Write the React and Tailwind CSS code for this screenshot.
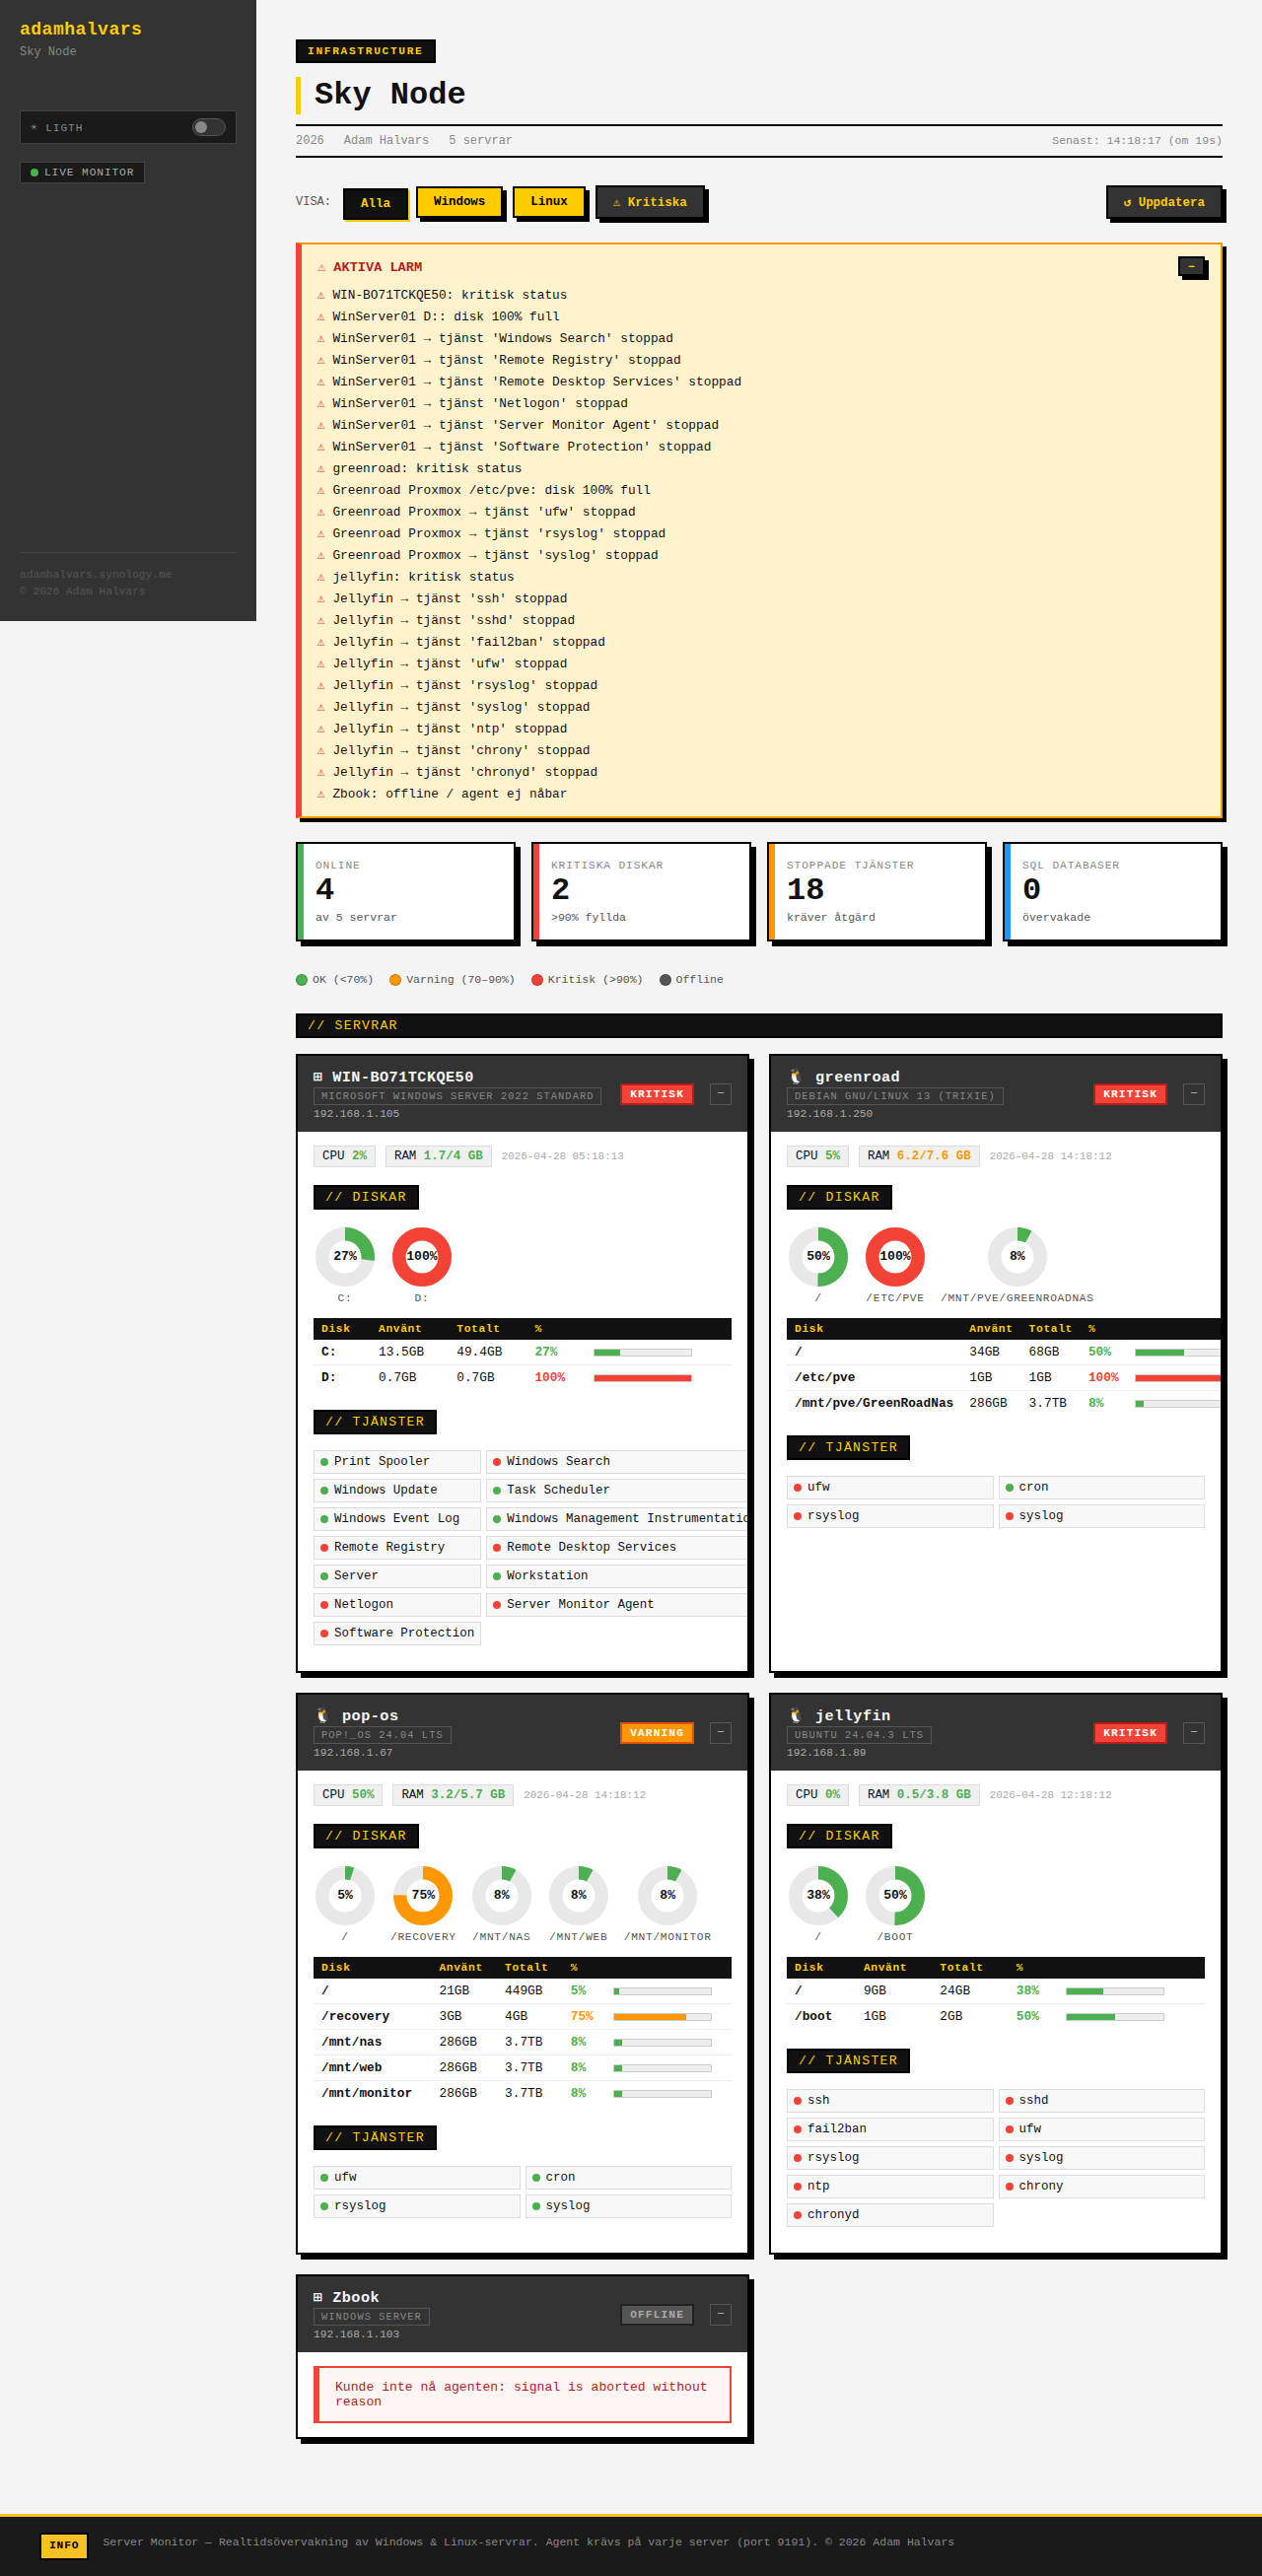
const MONO = "font-['Liberation_Mono','Courier_New',monospace]";

const alerts = [
  "WIN-BO71TCKQE50: kritisk status",
  "WinServer01 D:: disk 100% full",
  "WinServer01 → tjänst 'Windows Search' stoppad",
  "WinServer01 → tjänst 'Remote Registry' stoppad",
  "WinServer01 → tjänst 'Remote Desktop Services' stoppad",
  "WinServer01 → tjänst 'Netlogon' stoppad",
  "WinServer01 → tjänst 'Server Monitor Agent' stoppad",
  "WinServer01 → tjänst 'Software Protection' stoppad",
  "greenroad: kritisk status",
  "Greenroad Proxmox /etc/pve: disk 100% full",
  "Greenroad Proxmox → tjänst 'ufw' stoppad",
  "Greenroad Proxmox → tjänst 'rsyslog' stoppad",
  "Greenroad Proxmox → tjänst 'syslog' stoppad",
  "jellyfin: kritisk status",
  "Jellyfin → tjänst 'ssh' stoppad",
  "Jellyfin → tjänst 'sshd' stoppad",
  "Jellyfin → tjänst 'fail2ban' stoppad",
  "Jellyfin → tjänst 'ufw' stoppad",
  "Jellyfin → tjänst 'rsyslog' stoppad",
  "Jellyfin → tjänst 'syslog' stoppad",
  "Jellyfin → tjänst 'ntp' stoppad",
  "Jellyfin → tjänst 'chrony' stoppad",
  "Jellyfin → tjänst 'chronyd' stoppad",
  "Zbook: offline / agent ej nåbar",
];

const stats = [
  { label: "ONLINE", value: "4", sub: "av 5 servrar", bar: "bg-[#4caf50]" },
  { label: "KRITISKA DISKAR", value: "2", sub: ">90% fyllda", bar: "bg-[#f44336]" },
  { label: "STOPPADE TJÄNSTER", value: "18", sub: "kräver åtgärd", bar: "bg-[#ff9800]" },
  { label: "SQL DATABASER", value: "0", sub: "övervakade", bar: "bg-[#2196f3]" },
];

const legend = [
  ["OK (<70%)", "bg-[#4caf50]"],
  ["Varning (70–90%)", "bg-[#ff9800]"],
  ["Kritisk (>90%)", "bg-[#f44336]"],
  ["Offline", "bg-[#555]"],
];

const servers = [
  {
    icon: "⊞", name: "WIN-BO71TCKQE50", os: "MICROSOFT WINDOWS SERVER 2022 STANDARD", ip: "192.168.1.105",
    status: "KRITISK", cpu: "2%", ram: "1.7/4 GB", ramColor: "text-[#4caf50]", time: "2026-04-28 05:18:13",
    disks: [["C:", "13.5GB", "49.4GB", 27], ["D:", "0.7GB", "0.7GB", 100]],
    services: [
      ["Print Spooler", 1], ["Windows Search", 0], ["Windows Update", 1], ["Task Scheduler", 1],
      ["Windows Event Log", 1], ["Windows Management Instrumentation", 1], ["Remote Registry", 0],
      ["Remote Desktop Services", 0], ["Server", 1], ["Workstation", 1], ["Netlogon", 0],
      ["Server Monitor Agent", 0], ["Software Protection", 0],
    ],
  },
  {
    icon: "🐧", name: "greenroad", os: "DEBIAN GNU/LINUX 13 (TRIXIE)", ip: "192.168.1.250",
    status: "KRITISK", cpu: "5%", ram: "6.2/7.6 GB", ramColor: "text-[#ff9800]", time: "2026-04-28 14:18:12",
    disks: [["/", "34GB", "68GB", 50], ["/etc/pve", "1GB", "1GB", 100], ["/mnt/pve/GreenRoadNas", "286GB", "3.7TB", 8]],
    services: [["ufw", 0], ["cron", 1], ["rsyslog", 0], ["syslog", 0]],
  },
  {
    icon: "🐧", name: "pop-os", os: "POP!_OS 24.04 LTS", ip: "192.168.1.67",
    status: "VARNING", cpu: "50%", ram: "3.2/5.7 GB", ramColor: "text-[#4caf50]", time: "2026-04-28 14:18:12",
    disks: [["/", "21GB", "449GB", 5], ["/recovery", "3GB", "4GB", 75], ["/mnt/nas", "286GB", "3.7TB", 8], ["/mnt/web", "286GB", "3.7TB", 8], ["/mnt/monitor", "286GB", "3.7TB", 8]],
    services: [["ufw", 1], ["cron", 1], ["rsyslog", 1], ["syslog", 1]],
  },
  {
    icon: "🐧", name: "jellyfin", os: "UBUNTU 24.04.3 LTS", ip: "192.168.1.89",
    status: "KRITISK", cpu: "0%", ram: "0.5/3.8 GB", ramColor: "text-[#4caf50]", time: "2026-04-28 12:18:12",
    disks: [["/", "9GB", "24GB", 38], ["/boot", "1GB", "2GB", 50]],
    services: [["ssh", 0], ["sshd", 0], ["fail2ban", 0], ["ufw", 0], ["rsyslog", 0], ["syslog", 0], ["ntp", 0], ["chrony", 0], ["chronyd", 0]],
  },
  {
    icon: "⊞", name: "Zbook", os: "WINDOWS SERVER", ip: "192.168.1.103", status: "OFFLINE",
    error: "Kunde inte nå agenten: signal is aborted without reason",
  },
];

const badgeStyle = {
  KRITISK: "bg-[#f44336] border-[#b71c1c] text-white",
  VARNING: "bg-[#ff9800] border-[#e65100] text-white",
  OFFLINE: "bg-[#555] border-[#222] text-[#aaa]",
};

function level(p) {
  if (p > 90) return { text: "text-[#f44336]", bg: "bg-[#f44336]", hex: "#f44336" };
  if (p >= 70) return { text: "text-[#ff9800]", bg: "bg-[#ff9800]", hex: "#ff9800" };
  return { text: "text-[#4caf50]", bg: "bg-[#4caf50]", hex: "#4caf50" };
}

function SectionTag({ children, wide }) {
  return (
    <div className={`${wide ? "block" : "w-fit"} border-2 border-black bg-[#111] px-[10px] py-[3px] text-[13.12px] leading-[15px] tracking-[0.1em] text-[#ffcc00]`}>
      {children}
    </div>
  );
}

function Donut({ percent, label }) {
  const r = 23.25;
  const c = 2 * Math.PI * r;
  return (
    <div className="flex min-w-16 flex-col items-center gap-1">
      <div className="relative size-16">
        <svg viewBox="0 0 64 64" className="size-16 -rotate-90">
          <circle cx="32" cy="32" r={r} fill="none" stroke="#e8e8e8" strokeWidth="13.5" />
          <circle cx="32" cy="32" r={r} fill="none" stroke={level(percent).hex} strokeWidth="13.5" strokeDasharray={percent === 100 ? undefined : `${(c * percent) / 100} ${c}`} />
        </svg>
        <span className="absolute inset-0 flex items-center justify-center pb-px text-[13.12px] font-bold text-[#111]">{percent}%</span>
      </div>
      <span className="whitespace-nowrap text-[11.2px] uppercase leading-3 tracking-[0.7px] text-[#555]">{label}</span>
    </div>
  );
}

function DiskTable({ disks }) {
  return (
    <table className="w-full border-separate border-spacing-0 text-[12.8px] leading-[15px] text-[#111]">
      <thead>
        <tr className="bg-[#111] text-left text-[11.2px] leading-3 tracking-[0.06em] text-[#ffcc00]">
          {["Disk", "Använt", "Totalt", "%", ""].map((h) => (
            <th key={h} className="px-2 py-[5px] font-bold">{h}</th>
          ))}
        </tr>
      </thead>
      <tbody>
        {disks.map(([name, used, total, p], i) => {
          const cell = `px-2 py-[5px] align-middle whitespace-nowrap ${i < disks.length - 1 ? "border-b border-[#eee]" : ""}`;
          return (
            <tr key={name}>
              <td className={`${cell} font-bold`}>{name}</td>
              <td className={cell}>{used}</td>
              <td className={cell}>{total}</td>
              <td className={`${cell} font-bold ${level(p).text}`}>{p}%</td>
              <td className={cell}>
                <div className="h-2 w-[100px] border border-[#ccc] bg-[#eee]">
                  <div className={`h-full ${level(p).bg}`} style={{ width: `${p}%` }} />
                </div>
              </td>
            </tr>
          );
        })}
      </tbody>
    </table>
  );
}

function ServerCard({ s }) {
  return (
    <div className="min-w-0 overflow-hidden border-2 border-black bg-white shadow-[5px_5px_0_#000]">
      <div className="flex items-center bg-[#333] px-4 py-3">
        <div className="flex-1">
          <div className="h-5 whitespace-pre text-[15.2px] font-bold leading-5 tracking-[0.03em] text-[#f5f5f5]">{s.icon} {s.name}</div>
          <div className="w-fit whitespace-nowrap border border-[#555] px-[7px] py-[2px] text-[10.4px] leading-3 tracking-[0.1em] text-[#888]">{s.os}</div>
          <div className="mt-[3px] text-[11.2px] leading-3 text-[#aaa]">{s.ip}</div>
        </div>
        <span className={`border-2 px-2 py-[3px] text-[11.2px] font-bold leading-3 tracking-[0.1em] ${badgeStyle[s.status]}`}>{s.status}</span>
        <button className="ml-4 flex h-[22px] w-[22px] items-center justify-center border border-[#555] text-[12.8px] leading-[15px] text-[#aaa]">−</button>
      </div>
      <div className="px-4 py-[14px]">
        {s.error ? (
          <div className="border-2 border-l-6 border-[#f44336] bg-[#fff5f5] px-4 py-3 text-[13.12px] leading-[15px] text-[#b71c1c]">{s.error}</div>
        ) : (
          <>
            <div className="flex items-center gap-[10px] text-[12.48px] leading-[14px] text-[#111]">
              <span className="border border-[#ddd] bg-[#f0f0f0] px-2 py-[3px]">CPU <b className="text-[#4caf50]">{s.cpu}</b></span>
              <span className="border border-[#ddd] bg-[#f0f0f0] px-2 py-[3px]">RAM <b className={s.ramColor}>{s.ram}</b></span>
              <span className="text-[10.88px] leading-3 text-[#aaa]">{s.time}</span>
            </div>
            <div className="mt-[18px] mb-4"><SectionTag>// DISKAR</SectionTag></div>
            <div className="mb-[14px] flex gap-[14px]">
              {s.disks.map(([name, , , p]) => <Donut key={name} percent={p} label={name} />)}
            </div>
            <DiskTable disks={s.disks} />
            <div className="mt-5 mb-4"><SectionTag>// TJÄNSTER</SectionTag></div>
            <div className="mb-3 grid grid-cols-[1fr_1fr] gap-[5px]">
              {s.services.map(([name, up]) => (
                <div key={name} className="flex items-center gap-[6px] whitespace-nowrap border border-[#ddd] bg-[#f8f8f8] px-[6px] py-1 text-[12.48px] leading-[14px] text-[#111]">
                  <span className={`size-2 shrink-0 rounded-full ${up ? "bg-[#4caf50]" : "bg-[#f44336]"}`} />
                  {name}
                </div>
              ))}
            </div>
          </>
        )}
      </div>
    </div>
  );
}

function Sidebar() {
  return (
    <aside className="flex h-[630px] w-[260px] shrink-0 flex-col bg-[#333] p-5">
      <div className="text-[18px] font-bold leading-5 tracking-[0.5px] text-[#ffcc00]">adamhalvars</div>
      <div className="mt-[6px] text-[12px] leading-[14px] text-[#888]">Sky Node</div>
      <div className="mt-[52px] flex h-[34px] items-center justify-between border border-[#444] bg-[#1a1a1a] px-[10px]">
        <span className="text-[11.2px] tracking-[0.08em] text-[#888]">☀ LIGTH</span>
        <span className="flex h-[18px] w-[34px] items-center rounded-full border border-[#555] bg-[#333] pl-[2px]">
          <span className="size-3 rounded-full bg-[#888]" />
        </span>
      </div>
      <div className="mt-[18px] flex w-fit items-center gap-[6px] border border-[#444] bg-[#1a1a1a] px-[10px] py-1 text-[11.2px] leading-3 tracking-[0.08em] text-[#aaa]">
        <span className="size-2 rounded-full bg-[#4caf50]" />
        LIVE MONITOR
      </div>
      <div className="mt-auto border-t border-[#444] pt-[14px] pb-px text-[11.2px] leading-[17px] text-[#555]">
        <div>adamhalvars.synology.me</div>
        <div>© 2026 Adam Halvars</div>
      </div>
    </aside>
  );
}

export default function App() {
  const filter = "border-2 border-black px-4 py-[7px] text-[12.48px] font-bold";
  return (
    <div className={`${MONO} w-full bg-[#f4f4f4] leading-[normal] text-[#111]`}>
      <div className="flex h-[2550px]">
        <Sidebar />
        <main className="min-w-0 flex-1 px-10 pt-10">
          <div className="w-fit border-2 border-black bg-[#111] px-[10px] py-1 text-[11.2px] font-bold leading-3 tracking-[0.15em] text-[#ffcc00]">INFRASTRUCTURE</div>
          <h1 className="mt-[14px] h-[38px] border-l-5 border-[#ffcc00] pl-[14px] text-[32px] font-bold leading-[38px]">Sky Node</h1>
          <div className="mt-[10px] flex h-[34px] items-center gap-5 border-y-2 border-black text-[12px] text-[#888]">
            <span>2026</span>
            <span>Adam Halvars</span>
            <span>5 servrar</span>
            <span className="mb-px ml-auto text-[11.52px] leading-[13px]">Senast: 14:18:17 (om 19s)</span>
          </div>
          <div className="mt-7 flex h-[34px] items-center gap-[10px]">
            <span className="text-[12px] text-[#555]">VISA:</span>
            <button className={`${filter} translate-x-[2px] translate-y-[2px] bg-[#111] text-[#ffcc00] shadow-[2px_2px_0_#ffcc00]`}>Alla</button>
            <button className={`${filter} bg-[#ffcc00] text-black shadow-[4px_4px_0_#000]`}>Windows</button>
            <button className={`${filter} bg-[#ffcc00] text-black shadow-[4px_4px_0_#000]`}>Linux</button>
            <button className={`${filter} bg-[#333] text-[#ffcc00] shadow-[4px_4px_0_#000]`}>⚠ Kritiska</button>
            <button className={`${filter} ml-auto bg-[#333] text-[#ffcc00] shadow-[4px_4px_0_#000]`}>↺ Uppdatera</button>
          </div>

          <section className="mt-6 border-2 border-l-6 border-[#ff9800] border-l-[#f44336] bg-[#fff3cd] px-4 py-3 shadow-[4px_4px_0_#000]">
            <div className="mb-2 flex h-5 items-center justify-between">
              <span className="text-[13.6px] font-bold text-[#b71c1c]"><span className="text-[#f44336]">⚠</span> AKTIVA LARM</span>
              <button className="border-2 border-black bg-[#333] px-2 pt-[3px] pb-px text-[11.2px] font-bold leading-3 text-[#ffcc00] shadow-[4px_4px_0_#000]">−</button>
            </div>
            {alerts.map((a) => (
              <div key={a} className="h-[22px] text-[12.8px] leading-[23px]"><span className="text-[#f44336]">⚠</span> {a}</div>
            ))}
          </section>

          <section className="mt-6 grid grid-cols-4 gap-4">
            {stats.map((s) => (
              <div key={s.label} className="flex h-[101px] border-2 border-black bg-white shadow-[5px_5px_0_#000]">
                <div className={`w-[6px] ${s.bar}`} />
                <div className="px-3 py-4">
                  <div className="text-[11.2px] leading-3 tracking-[0.08em] text-[#888]">{s.label}</div>
                  <div className="my-1 text-[32px] font-bold leading-8">{s.value}</div>
                  <div className="text-[11.52px] leading-[13px] text-[#555]">{s.sub}</div>
                </div>
              </div>
            ))}
          </section>

          <div className="mt-6 mb-5 flex gap-4 py-2 text-[11.52px] leading-[13px] text-[#555]">
            {legend.map(([t, c]) => (
              <span key={t} className="flex items-center gap-[5px]">
                <span className={`size-3 rounded-full border border-black/20 ${c}`} />
                {t}
              </span>
            ))}
          </div>

          <SectionTag wide>// SERVRAR</SectionTag>

          <div className="mt-4 grid grid-cols-2 gap-5">
            {servers.map((s) => <ServerCard key={s.name} s={s} />)}
          </div>
        </main>
      </div>
      <footer className="flex h-[63px] items-start gap-[14px] border-t-3 border-[#f5c022] bg-[#1a1a1a] px-10 pt-4 text-[11.52px] text-[#888]">
        <span className="border-2 border-black bg-[#f7c025] px-2 pt-[5px] pb-[7px] text-[11.2px] font-bold leading-3 tracking-[0.08em] text-black">INFO</span>
        <span className="leading-[19px]">Server Monitor — Realtidsövervakning av Windows &amp; Linux-servrar. Agent krävs på varje server (port 9191). © 2026 Adam Halvars</span>
      </footer>
    </div>
  );
}
